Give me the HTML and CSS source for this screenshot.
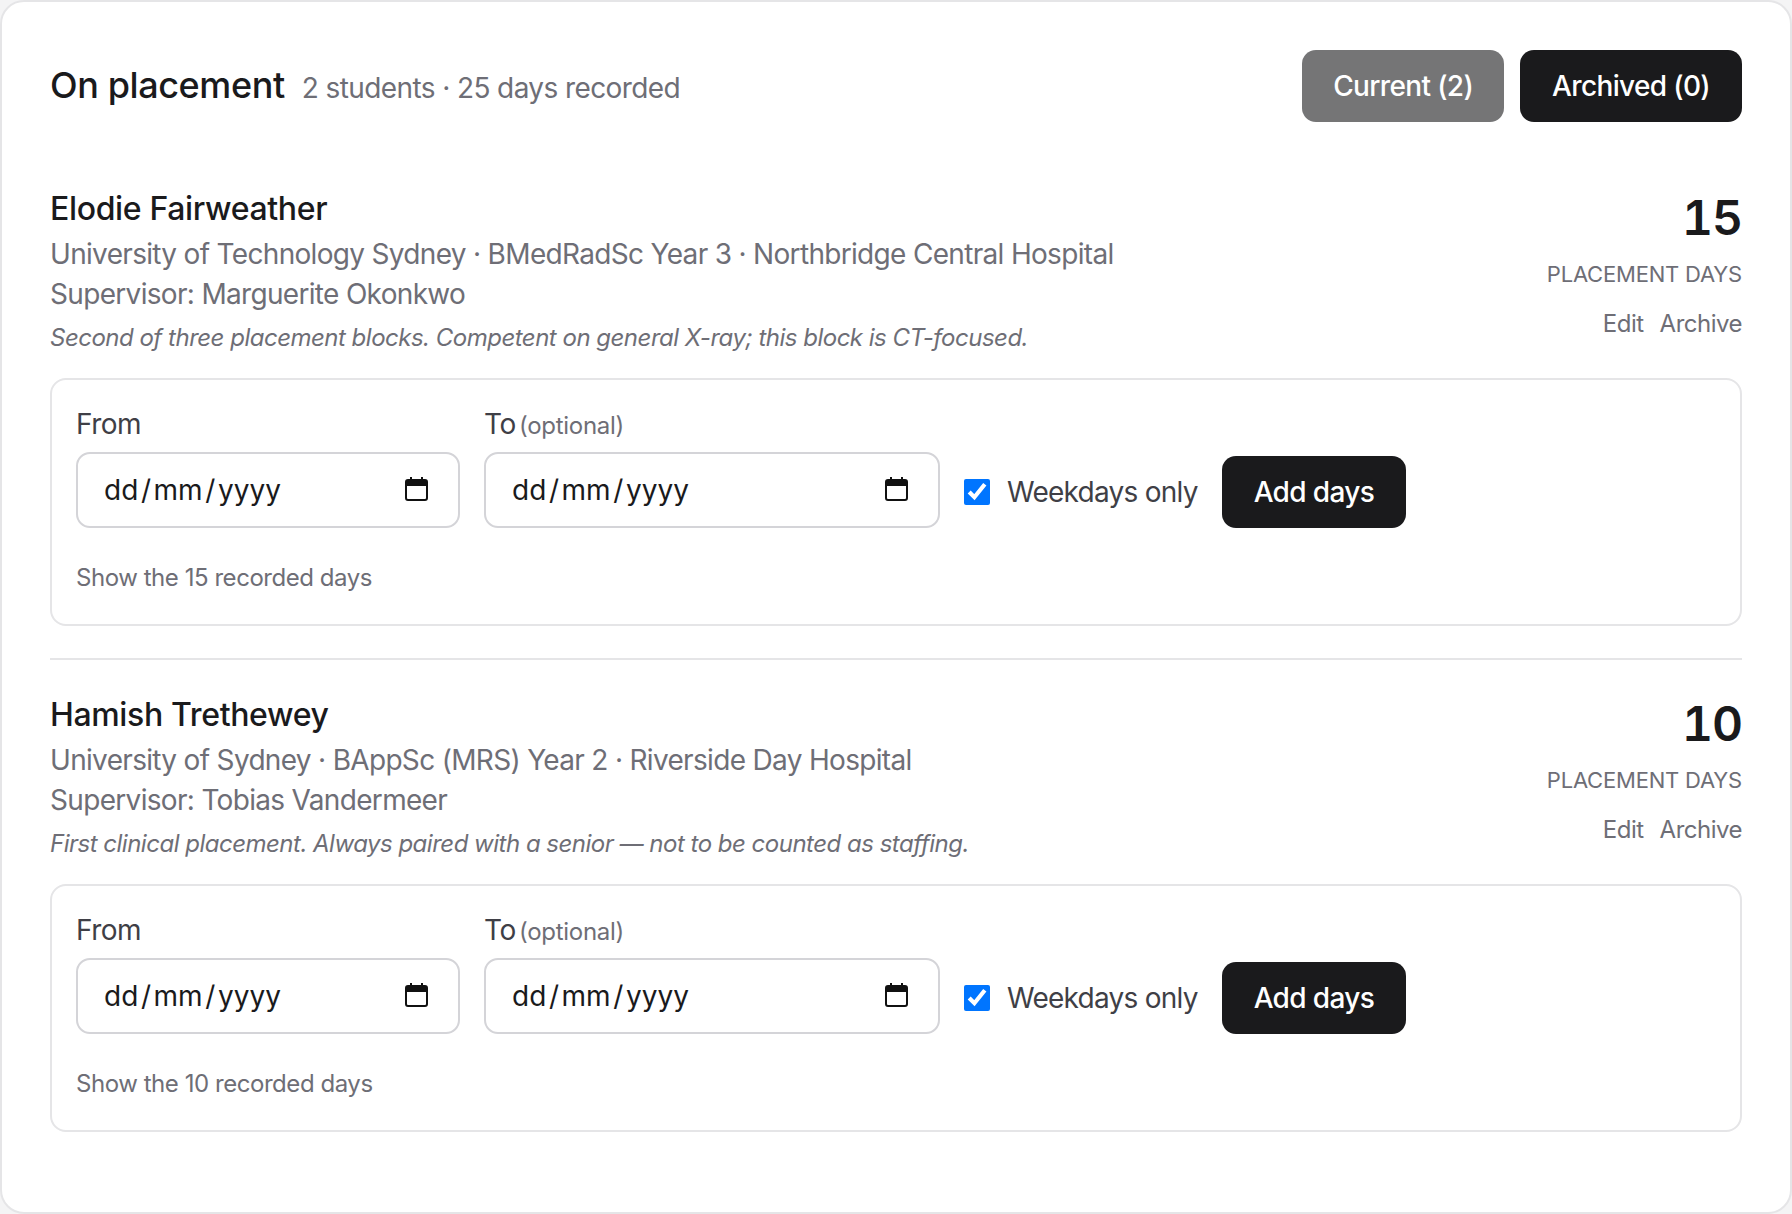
FILE: index.html
```html
<!DOCTYPE html>
<html lang="en-GB">
<head>
<meta charset="utf-8">
<title>On placement</title>
<link rel="stylesheet" href="styles.css">
</head>
<body>
<main class="card">
  <header class="top">
    <div class="heading">
      <h2>On placement</h2>
      <span class="summary">2 students · 25 days recorded</span>
    </div>
    <div class="tabs">
      <button class="btn btn-muted">Current (2)</button>
      <button class="btn">Archived (0)</button>
    </div>
  </header>

  <section class="student">
    <div class="info">
      <div class="who">
        <h3>Elodie Fairweather</h3>
        <p class="meta">University of Technology Sydney · BMedRadSc Year 3 · Northbridge Central Hospital</p>
        <p class="meta">Supervisor: Marguerite Okonkwo</p>
        <p class="note">Second of three placement blocks. Competent on general X-ray; this block is CT-focused.</p>
      </div>
      <div class="tally">
        <div class="count">15</div>
        <div class="unit">PLACEMENT DAYS</div>
        <div class="links"><a>Edit</a><a>Archive</a></div>
      </div>
    </div>
    <form class="panel">
      <div class="fields">
        <label class="field field-from"><span class="lab">From</span><span class="date"><span class="mask">dd<i>/</i>mm<i>/</i>yyyy</span><svg class="cal" viewBox="0 0 23 24"><path class="ear" d="M5 0h2v4H5zM16 0h2v4h-2z"/><path class="bar" d="M1 5a2 2 0 0 1 2-2h17a2 2 0 0 1 2 2v4H1z"/><rect x="1" y="3" width="21" height="20" rx="2"/></svg></span></label>
        <label class="field field-to"><span class="lab">To <small>(optional)</small></span><span class="date"><span class="mask">dd<i>/</i>mm<i>/</i>yyyy</span><svg class="cal" viewBox="0 0 23 24"><path class="ear" d="M5 0h2v4H5zM16 0h2v4h-2z"/><path class="bar" d="M1 5a2 2 0 0 1 2-2h17a2 2 0 0 1 2 2v4H1z"/><rect x="1" y="3" width="21" height="20" rx="2"/></svg></span></label>
        <label class="check"><input type="checkbox" checked><span>Weekdays only</span></label>
        <button type="button" class="btn btn-add">Add days</button>
      </div>
      <p class="show">Show the 15 recorded days</p>
    </form>
  </section>

  <section class="student student-next">
    <div class="info">
      <div class="who">
        <h3>Hamish Trethewey</h3>
        <p class="meta">University of Sydney · BAppSc (MRS) Year 2 · Riverside Day Hospital</p>
        <p class="meta">Supervisor: Tobias Vandermeer</p>
        <p class="note">First clinical placement. Always paired with a senior — not to be counted as staffing.</p>
      </div>
      <div class="tally">
        <div class="count">10</div>
        <div class="unit">PLACEMENT DAYS</div>
        <div class="links"><a>Edit</a><a>Archive</a></div>
      </div>
    </div>
    <form class="panel">
      <div class="fields">
        <label class="field field-from"><span class="lab">From</span><span class="date"><span class="mask">dd<i>/</i>mm<i>/</i>yyyy</span><svg class="cal" viewBox="0 0 23 24"><path class="ear" d="M5 0h2v4H5zM16 0h2v4h-2z"/><path class="bar" d="M1 5a2 2 0 0 1 2-2h17a2 2 0 0 1 2 2v4H1z"/><rect x="1" y="3" width="21" height="20" rx="2"/></svg></span></label>
        <label class="field field-to"><span class="lab">To <small>(optional)</small></span><span class="date"><span class="mask">dd<i>/</i>mm<i>/</i>yyyy</span><svg class="cal" viewBox="0 0 23 24"><path class="ear" d="M5 0h2v4H5zM16 0h2v4h-2z"/><path class="bar" d="M1 5a2 2 0 0 1 2-2h17a2 2 0 0 1 2 2v4H1z"/><rect x="1" y="3" width="21" height="20" rx="2"/></svg></span></label>
        <label class="check"><input type="checkbox" checked><span>Weekdays only</span></label>
        <button type="button" class="btn btn-add">Add days</button>
      </div>
      <p class="show">Show the 10 recorded days</p>
    </form>
  </section>
</main>
</body>
</html>
```
FILE: styles.css
```css
* { box-sizing: border-box; }
html, body { margin: 0; padding: 0; background: #f4f4f5; }
body { font-family: Inter, "Liberation Sans", sans-serif; color: #1a1a1c; }
h2, h3, p { margin: 0; }

.card {
  height: 1214px;
  border: 2px solid #e5e5e7;
  border-radius: 24px;
  padding: 48px;
  background: #fff;
}
.top { display: flex; justify-content: space-between; align-items: center; height: 72px; }
.heading { display: flex; align-items: baseline; gap: 17px; margin-top: -2px; }
h2 { font-size: 36px; font-weight: 500; letter-spacing: -0.4px; }
.summary { font-size: 28px; letter-spacing: -0.6px; color: #6e6e76; }
.tabs { display: flex; gap: 16px; }
.btn {
  height: 72px;
  padding: 0 32px;
  border: 0;
  border-radius: 14px;
  background: #1a1a1c;
  color: #fff;
  font: 500 28px Inter, sans-serif;
  letter-spacing: -0.65px;
}
.btn-muted { opacity: .6; padding: 0 31px; }
.student { margin-top: 66px; }
.student-next { margin-top: 32px; border-top: 2px solid #e5e5e7; padding-top: 34px; }
.info { display: flex; justify-content: space-between; }
h3 { font-size: 32px; font-weight: 500; line-height: 42px; letter-spacing: -0.35px; margin-bottom: 4px; }
.meta { font-size: 28px; line-height: 40px; letter-spacing: -0.68px; color: #6e6e76; }
.note { font-size: 24px; font-style: italic; line-height: 36px; letter-spacing: -0.5px; color: #6e6e76; margin-top: 6px; }
.tally { text-align: right; }
.count { font-size: 48px; font-weight: 600; font-variant-numeric: tabular-nums; letter-spacing: -1px; line-height: 60px; }
.unit { font-size: 22px; line-height: 32px; letter-spacing: -0.2px; color: #6e6e76; margin-top: 10px; }
.links { display: flex; justify-content: flex-end; gap: 16px; font-size: 24px; line-height: 34px; letter-spacing: -0.5px; color: #6e6e76; margin-top: 17px; }
.panel { margin-top: 22px; border: 2px solid #e5e5e7; border-radius: 16px; height: 248px; padding: 24px; }
.fields { display: flex; align-items: flex-end; gap: 24px; }
.field { display: flex; flex-direction: column; gap: 8px; }
.field-from { width: 384px; }
.field-to { width: 456px; }
.lab { font-size: 28px; line-height: 40px; letter-spacing: -0.5px; color: #3f3f46; }
.lab small { font-size: 24px; line-height: 1; letter-spacing: -0.3px; color: #6e6e76; margin-left: -4px; }
.date {
  height: 76px;
  border: 2px solid #d4d4d8;
  border-radius: 14px;
  display: flex;
  align-items: center;
  justify-content: space-between;
  padding: 0 30px 0 26px;
  font-size: 28px;
  color: #1a1a1c;
}
.mask i { font-style: normal; margin: 0 2.6px; }
.cal { width: 23px; height: 24px; margin-top: -3px; fill: none; }
.cal rect { stroke: #111; stroke-width: 2; }
.cal .bar, .cal .ear { fill: #111; }
.check { display: flex; align-items: center; gap: 17px; font-size: 28px; letter-spacing: -0.75px; color: #3f3f46; height: 72px; }
.check input { width: 26px; height: 26px; margin: 0; accent-color: #0075ff; }
.show { margin-top: 32px; font-size: 24px; line-height: 36px; letter-spacing: -0.45px; color: #6e6e76; }
```
